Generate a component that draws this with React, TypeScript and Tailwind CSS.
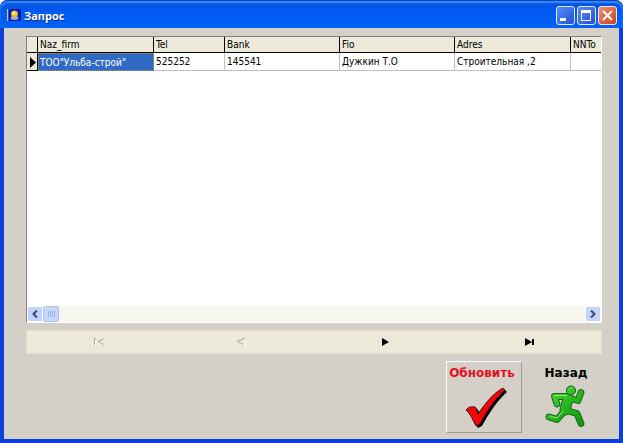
const columns = [
  { name: "Naz_firm", width: "w-[116px]" },
  { name: "Tel", width: "w-[71px]" },
  { name: "Bank", width: "w-[115px]" },
  { name: "Fio", width: "w-[115px]" },
  { name: "Adres", width: "w-[116px]" },
  { name: "NNTo", width: "" },
];

const rows = [['ТОО"Ульба-строй"', "525252", "145541", "Дужкин Т.О", "Строительная ,2", ""]];

const captionButton =
  "flex size-[19px] items-center justify-center rounded-[3px] border border-[#dfe8fc] bg-linear-to-br";

function TitleBar() {
  return (
    <header className="flex h-7 items-center rounded-t-lg bg-linear-to-b from-[#0a4fd0] via-[#0058ee] via-30% to-[#0262fa] px-1.5 pt-0.5 shadow-[inset_0_1px_0_#0a3fc0,inset_0_3px_2px_#3a8cf8]">
      <svg viewBox="0 0 16 16" className="size-4" aria-hidden="true">
        <rect x="3" y="2" width="12" height="12" fill="#0a18a8" />
        <path d="M1.5 2v12" stroke="#d8c890" />
        <ellipse cx="8.5" cy="11" rx="4" ry="2" fill="#8fa8d8" />
        <circle cx="8.5" cy="7" r="3.4" fill="#e8c020" />
        <circle cx="7.8" cy="6.2" r="1.6" fill="#fff080" />
      </svg>
      <h1 className="ml-0.5 flex-1 pt-px font-['Open_Sans',sans-serif] text-[11px] leading-4 font-bold text-white [text-shadow:1px_1px_0_#0a2f90]">
        Запрос
      </h1>
      <div className="flex gap-0.5">
        <button type="button" aria-label="Свернуть" className={`${captionButton} from-[#5a8cf8] to-[#1e50d0]`}>
          <svg viewBox="0 0 17 17" className="size-[17px]">
            <rect x="3" y="11" width="6" height="3" fill="#fff" />
          </svg>
        </button>
        <button type="button" aria-label="Развернуть" className={`${captionButton} from-[#5a8cf8] to-[#1e50d0]`}>
          <svg viewBox="0 0 17 17" className="size-[17px]">
            <path d="M3.5 4v9.5h9V4" fill="none" stroke="#fff" />
            <rect x="3" y="3" width="10" height="3" fill="#fff" />
          </svg>
        </button>
        <button type="button" aria-label="Закрыть" className={`${captionButton} from-[#f09070] to-[#cc3c14]`}>
          <svg viewBox="0 0 17 17" className="size-[17px]">
            <path d="M4 4l9 9M13 4l-9 9" stroke="#fff" strokeWidth="2" />
          </svg>
        </button>
      </div>
    </header>
  );
}

function DataGrid() {
  return (
    <section className="flex h-[287px] flex-col overflow-hidden border border-t-[#808080] border-r-white border-b-white border-l-[#808080] bg-white">
      <div className="flex-1 overflow-hidden">
        <table className="w-full table-fixed border-separate border-spacing-0 text-left font-['DejaVu_Sans_Condensed','Liberation_Sans',sans-serif] text-[10px] leading-4">
          <thead>
            <tr className="bg-[#ece9d8]">
              <th aria-label="Указатель" className="h-4 w-[11px] border-r border-b border-black p-0" />
              {columns.map((c) => (
                <th
                  key={c.name}
                  className={`${c.width} h-4 overflow-hidden border-r border-b border-black p-0 pl-0.5 leading-[15px] font-normal whitespace-nowrap last:border-r-0`}
                >
                  {c.name}
                </th>
              ))}
            </tr>
          </thead>
          <tbody>
            {rows.map((row) => (
              <tr key={row[0]}>
                <td className="border-r border-b border-black bg-[#ece9d8] p-0">
                  <svg viewBox="0 0 10 16" className="h-4 w-2.5">
                    <path d="M3 3v11l6-5.5z" fill="#000" />
                  </svg>
                </td>
                {row.map((cell, i) => (
                  <td
                    key={columns[i].name}
                    className={
                      i === 0
                        ? "overflow-hidden border border-dotted border-[#c09040] bg-[#316ac5] p-0 pl-px leading-[15px] whitespace-nowrap text-white"
                        : "overflow-hidden border-r border-b border-[#c0c0c0] p-0 pt-px pl-0.5 whitespace-nowrap last:border-r-0"
                    }
                  >
                    {cell}
                  </td>
                ))}
              </tr>
            ))}
          </tbody>
        </table>
      </div>
      <div className="flex h-4 items-center bg-[#f7f6f1]">
        <button type="button" aria-label="Влево" className="flex size-4 items-center justify-center rounded-xs border border-white bg-[#c4d3fb]">
          <svg viewBox="0 0 8 8" className="size-2">
            <path d="M6 0.5L2.5 4L6 7.5" fill="none" stroke="#38496b" strokeWidth="2" />
          </svg>
        </button>
        <button type="button" aria-label="Ползунок" className="flex size-4 items-center justify-center rounded-xs border border-[#b0c4f4] bg-[#c8d6fb]">
          <svg viewBox="0 0 8 8" className="size-2">
            <path d="M1.5 1v6M3.5 1v6M5.5 1v6M7.5 1v6" stroke="#9db4f0" />
          </svg>
        </button>
        <div className="flex-1" />
        <button type="button" aria-label="Вправо" className="flex size-4 items-center justify-center rounded-xs border border-white bg-[#c4d3fb]">
          <svg viewBox="0 0 8 8" className="size-2">
            <path d="M2 0.5L5.5 4L2 7.5" fill="none" stroke="#38496b" strokeWidth="2" />
          </svg>
        </button>
      </div>
    </section>
  );
}

function Navigator() {
  return (
    <nav className="mt-[7px] grid h-6 grid-cols-4 border border-[#e2dfd0] bg-[#ece9d8]">
      <button type="button" disabled aria-label="Первая запись" className="flex items-center justify-center">
        <svg viewBox="0 0 12 10" className="h-2.5 w-3">
          <path d="M2.5 2v7M12 3L6 5.5l6 2.5" fill="none" stroke="#fff" />
          <path d="M3 1.5H1.5v7M11 2L5 4.5l6 3" fill="none" stroke="#aca899" />
        </svg>
      </button>
      <button type="button" disabled aria-label="Предыдущая запись" className="flex items-center justify-center">
        <svg viewBox="0 0 12 10" className="h-2.5 w-3">
          <path d="M2 5l8 4V3" fill="none" stroke="#fff" />
          <path d="M9 1L1 4.5l7 3" fill="none" stroke="#aca899" />
        </svg>
      </button>
      <button type="button" aria-label="Следующая запись" className="flex items-center justify-center">
        <svg viewBox="0 0 12 10" className="h-2.5 w-3">
          <path d="M2 1v8l7-4z" fill="#000" />
        </svg>
      </button>
      <button type="button" aria-label="Последняя запись" className="flex items-center justify-center">
        <svg viewBox="0 0 12 10" className="h-2.5 w-3">
          <path d="M2 1v8l7-4zM9 2h2v6H9z" fill="#000" />
        </svg>
      </button>
    </nav>
  );
}

function CheckIcon() {
  const d = "M1 22c2-3 6-4 9-3 2 1 2 4 3 7C20 16 27 6 38 0l2 2C30 11 22 23 15 36l-4 2C8 33 6 26 1 22z";
  return (
    <svg viewBox="0 0 43 41" className="h-[41px] w-[43px]" aria-hidden="true">
      <path d={d} transform="translate(2 2)" fill="#000" />
      <path d={d} fill="#f00808" stroke="#200000" strokeWidth="0.8" />
    </svg>
  );
}

function RunnerIcon() {
  const limbs =
    "M20 11.500H9.500L12 19M27 14l6 1.500L36 7.500M20 25.500L12 34.500L4 32M21 25.500L32 28.500L36 38.500";
  const torso = "M23 14L20 25";
  return (
    <svg viewBox="0 0 42 44" className="h-11 w-[42px]" aria-hidden="true">
      <defs>
        <linearGradient id="runner" gradientUnits="userSpaceOnUse" x1="6" y1="4" x2="36" y2="40">
          <stop offset="0" stopColor="#4fd83c" />
          <stop offset="0.5" stopColor="#24b41c" />
          <stop offset="1" stopColor="#109a10" />
        </linearGradient>
      </defs>
      <g fill="none" strokeLinecap="round" strokeLinejoin="round">
        <path d={limbs} stroke="#1c641c" strokeWidth="6.8" />
        <path d={torso} stroke="#1c641c" strokeWidth="11" />
        <path d={limbs} stroke="url(#runner)" strokeWidth="4.8" />
        <path d={torso} stroke="url(#runner)" strokeWidth="9" />
        <circle cx="26" cy="5.5" r="4.600" fill="url(#runner)" stroke="#1c641c" />
        <path d="M24 4c1-1 2-1 3-1M10 10.500h12M18 26l-6 7-7-2" stroke="#8cec60" />
      </g>
    </svg>
  );
}

export default function App() {
  return (
    <div className="flex min-h-screen flex-col rounded-t-lg bg-[#0a3fd8] font-['Liberation_Sans',Arial,sans-serif] text-black">
      <TitleBar />
      <main className="mx-1 mb-1 flex flex-1 flex-col border-b border-[#c8d8f4] bg-[#d4d0c8] pt-2 pr-[17px] pb-1 pl-[22px]">
        <DataGrid />
        <Navigator />
        <div className="mt-[7px] flex justify-end gap-2">
          <button
            type="button"
            className="flex h-[72px] w-[76px] flex-col items-center border border-t-white border-r-[#a09c94] border-b-[#a09c94] border-l-white pt-[3px] pr-1 font-['DejaVu_Sans',Verdana,sans-serif] text-[12px] leading-4 font-bold text-[#e81020]"
          >
            Обновить
            <span className="mt-[7px] pl-2">
              <CheckIcon />
            </span>
          </button>
          <button
            type="button"
            className="flex h-[72px] w-[72px] flex-col items-center pt-1 font-['DejaVu_Sans',Verdana,sans-serif] text-[12px] leading-4 font-bold"
          >
            Назад
            <span className="mt-1">
              <RunnerIcon />
            </span>
          </button>
        </div>
      </main>
    </div>
  );
}
